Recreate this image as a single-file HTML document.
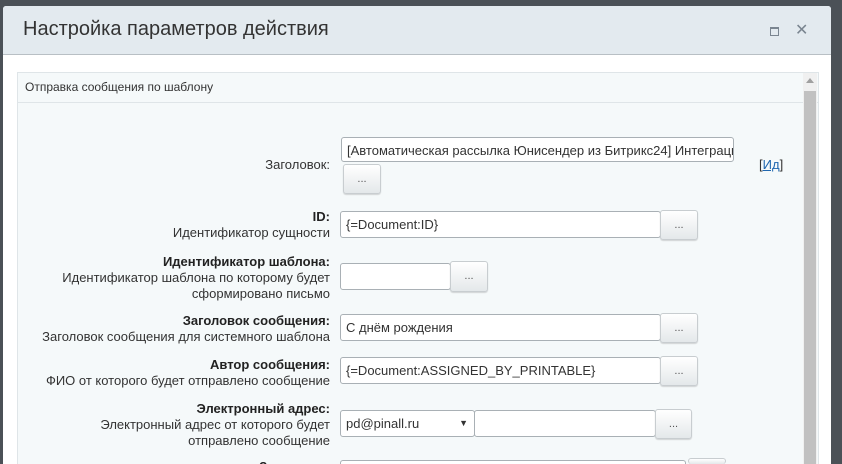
<!DOCTYPE html>
<html><head><meta charset="utf-8"><style>
*{box-sizing:border-box;margin:0;padding:0}
html,body{width:842px;height:464px;overflow:hidden}
body{background:#4b5157;font-family:"Liberation Sans",Arial,sans-serif}
.wrap{position:relative;width:842px;height:464px;overflow:hidden}
.dlg{position:absolute;left:3px;top:6px;width:828px;height:458px;background:#fff;border-radius:3px 3px 0 0;overflow:hidden}
.hdr{height:49px;background:#e3eaef;border-bottom:1px solid #b8bfc4;position:relative}
.hdr h1{position:absolute;left:20px;top:12px;font-weight:normal;font-size:20px;color:#333}
.box{position:absolute;left:17px;top:72px;width:802px;height:392px;background:#f5f9fa;border:1px solid #dfe5e8;border-bottom:0;overflow:hidden}
.cap{height:30px;border-bottom:1px solid #dfe5e8;font-size:12px;color:#333;padding:7px 0 0 7px}
.sb{position:absolute;left:785px;top:0;width:14px;height:392px;background:#f0f0f0;overflow:hidden}
.sb .th{position:absolute;left:1px;top:18px;width:12px;height:374px;background:#c1c1c1}
.a{position:absolute}
.lbl{position:absolute;right:512px;text-align:right;font-size:13px;color:#333;line-height:16px;width:300px}
.lbl b{font-weight:bold;color:#222}
.in{position:absolute;background:#fff;border:1px solid #a9b0b5;border-radius:3px;font-size:13px;color:#333;padding:4px 5px;white-space:nowrap;overflow:hidden;height:27px;line-height:17px}
.bt{position:absolute;border:1px solid #c8cdd0;border-radius:3px;background:linear-gradient(#fff,#e4e8ea);font-size:11px;color:#555;text-align:center;line-height:22px;box-shadow:0 1px 1px rgba(0,0,0,.15)}
.clip{position:absolute;left:0;top:0;width:842px;height:464px;overflow:hidden}
</style></head><body><div class="wrap">
<div class="dlg">
<div class="hdr"><h1>Настройка параметров действия</h1>
<div class="a" style="left:767px;top:21px;width:9px;height:9px;border:1px solid #7a8590;border-top-width:2px"></div>
<div class="a" style="left:792px;top:14px;font-size:16px;color:#7a8590">✕</div>
</div>
</div>
<div class="box">
<div class="cap">Отправка сообщения по шаблону</div>
<div class="sb"><div class="a" style="left:3px;top:5px;width:0;height:0;border-left:4px solid transparent;border-right:4px solid transparent;border-bottom:5px solid #a0a0a0"></div><div class="th"></div></div>
</div>
<div class="clip">
<div class="lbl" style="top:157px">Заголовок:</div>
<div class="in" style="left:341px;top:137px;width:393px;height:25px">[Автоматическая рассылка Юнисендер из Битрикс24] Интеграция</div>
<div class="bt" style="left:343px;top:164px;width:38px;height:30px;line-height:28px">...</div>
<div class="a" style="left:759px;top:157px;font-size:13px;color:#333">[<span style="color:#2067b0;text-decoration:underline">Ид</span>]</div>

<div class="lbl" style="top:209px"><b>ID:</b><br>Идентификатор сущности</div>
<div class="in" style="left:340px;top:211px;width:321px">{=Document:ID}</div>
<div class="bt" style="left:660px;top:210px;width:38px;height:30px;line-height:28px">...</div>

<div class="lbl" style="top:254px"><b>Идентификатор шаблона:</b><br>Идентификатор шаблона по которому будет<br>сформировано письмо</div>
<div class="in" style="left:340px;top:263px;width:111px"></div>
<div class="bt" style="left:450px;top:261px;width:38px;height:31px;line-height:29px">...</div>

<div class="lbl" style="top:313px"><b>Заголовок сообщения:</b><br>Заголовок сообщения для системного шаблона</div>
<div class="in" style="left:340px;top:314px;width:321px">С днём рождения</div>
<div class="bt" style="left:660px;top:313px;width:38px;height:30px;line-height:28px">...</div>

<div class="lbl" style="top:357px"><b>Автор сообщения:</b><br>ФИО от которого будет отправлено сообщение</div>
<div class="in" style="left:340px;top:357px;width:321px">{=Document:ASSIGNED_BY_PRINTABLE}</div>
<div class="bt" style="left:660px;top:356px;width:38px;height:30px;line-height:28px">...</div>

<div class="lbl" style="top:401px"><b>Электронный адрес:</b><br>Электронный адрес от которого будет<br>отправлено сообщение</div>
<div class="in" style="left:340px;top:410px;width:135px">pd@pinall.ru<span style="position:absolute;right:6px;top:4px;font-size:9px">▼</span></div>
<div class="in" style="left:474px;top:410px;width:182px"></div>
<div class="bt" style="left:655px;top:409px;width:37px;height:30px;line-height:28px">...</div>

<div class="lbl" style="top:459px;height:5px;overflow:hidden"><b>Заголовок:</b></div>
<div class="in" style="left:340px;top:460px;width:346px;height:4px;border-bottom:0;border-radius:3px 3px 0 0"></div>
<div class="bt" style="left:688px;top:458px;width:38px;height:6px;border-bottom:0;box-shadow:none"></div>
</div>
</div></body></html>
